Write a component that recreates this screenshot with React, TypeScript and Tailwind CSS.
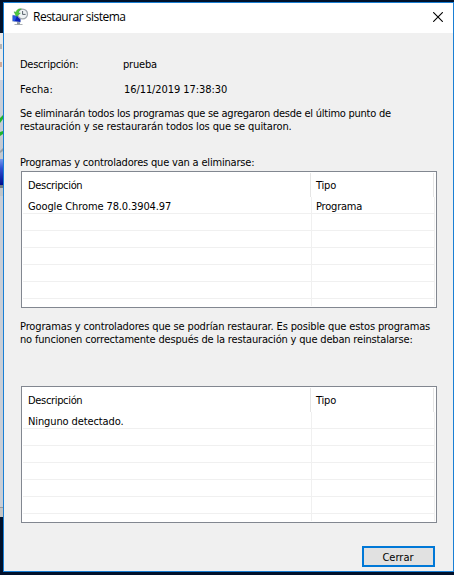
import React from "react";

function Table({ name, kind }: { name: string; kind: string }) {
  return (
    <div className="ml-[17px] flex h-[137px] w-[416px] flex-col border border-[#828790] bg-white p-px">
      <div className="flex h-[24px] shrink-0 pr-px">
        <div className="w-[288px] shrink-0 border-r border-[#e5e5e5] pl-[5px] pt-[6px] leading-[13px] tracking-[-0.33px]">Descripción</div>
        <div className="w-[123px] border-r border-[#e5e5e5] pl-[5px] pt-[6px] leading-[13px] tracking-[-0.2px]">Tipo</div>
      </div>
      <div className="flex h-[17px] shrink-0 border-b border-[#f0f0f0]">
        <div className="w-[289px] shrink-0 border-r border-[#f0f0f0] pl-[5px] pt-[3px] leading-[13px] tracking-[-0.11px]">{name}</div>
        <div className="w-[123px] border-r border-[#f0f0f0] pl-[4px] pt-[3px] leading-[13px] tracking-[-0.2px]">{kind}</div>
      </div>
      {[0, 1, 2, 3, 4].map((i) => (
        <div key={i} className="flex h-[17px] shrink-0 border-b border-[#f0f0f0]">
          <div className="w-[289px] border-r border-[#f0f0f0]" />
          <div className="w-[123px] border-r border-[#f0f0f0]" />
        </div>
      ))}
      <div className="flex flex-1">
        <div className="w-[289px] border-r border-[#f0f0f0]" />
        <div className="w-[123px] border-r border-[#f0f0f0]" />
      </div>
    </div>
  );
}

function RestoreIcon() {
  return (
    <svg className="ml-[8px] mt-[5px] h-[18px] w-[17px] shrink-0" viewBox="0 0 17 18">
      <path d="M3 16h7l1 1H2z" fill="#aab0b4" />
      <path d="M5 14h3v2.4H5z" fill="#8d979e" />
      <path d="M0 6.8 9 7.6v7L0 13.8z" fill="#c8d3dd" />
      <path d="M.8 7.6 8.4 8.4v5.5L.8 13.1z" fill="#0a22b8" />
      <path d="M.8 7.6 4.8 8l-2 5.3-2-.2z" fill="#2358e0" />
      <circle cx="10.6" cy="6" r="4.9" fill="#eef2f4" stroke="#a0a8ae" strokeWidth="1.3" />
      <path d="M10.6 3v3.4h3" fill="none" stroke="#56616a" strokeWidth="1" />
      <path d="M9.4.8C6.4.4 4.6 1.8 4 4.2L2 3.8 4.4 8.4l4-3.2-2.1-.5C6.6 3 7.8 1.8 9.4.8z" fill="#4fc93c" stroke="#299a25" strokeWidth=".4" />
    </svg>
  );
}

function BackgroundEdge() {
  return (
    <div className="flex w-[3px] shrink-0 flex-col overflow-hidden">
      <div className="h-[31px] shrink-0" />
      <div className="h-[47px] shrink-0 bg-[#e9e9e9]">
        <div className="mt-[11px] h-[5px] w-[2px] bg-[#b5b5b5]" />
        <div className="mt-[13px] h-[5px] w-[2px] bg-[#cfaa98]" />
      </div>
      <svg className="h-[116px] w-[3px] shrink-0" viewBox="0 0 3 116">
        <defs>
          <linearGradient id="sky" x1="0" y1="0" x2="0" y2="1">
            <stop offset="0" stopColor="#ccd1dd" />
            <stop offset="1" stopColor="#bfc4c8" />
          </linearGradient>
          <linearGradient id="screen" x1="0" y1="0" x2="0" y2="1">
            <stop offset="0" stopColor="#7598ee" />
            <stop offset=".35" stopColor="#3152d4" />
            <stop offset="1" stopColor="#000c8c" />
          </linearGradient>
        </defs>
        <path d="M0 0h3v116H0z" fill="url(#sky)" />
        <path d="M0 38 3 35v4l-3 4zM0 52l3-1v3l-3 2z" fill="#20b52b" />
        <path d="M0 71 3 68v3l-3 2z" fill="#989fa6" />
        <path d="M0 79h3v26H0z" fill="url(#screen)" />
        <path d="M0 105h3v3H0z" fill="#707a84" />
      </svg>
      <div className="flex-1 bg-[#c9ced6]" />
      <div className="h-[10px] shrink-0 border-t border-[#999] bg-[#c4c4c4]" />
      <div className="h-[58px] shrink-0" />
    </div>
  );
}

export default function App() {
  return (
    <div className="flex h-[575px] w-[454px] overflow-hidden whitespace-nowrap bg-[#00112b] pt-[2px] font-[family-name:'DejaVu_Sans_Condensed','DejaVu_Sans',sans-serif] text-[11px] text-black">
      <BackgroundEdge />
      <div className="flex h-[570px] w-[451px] flex-col border border-[#1a7fd4] bg-[#f0f0f0]">
        <div className="flex h-[30px] shrink-0 bg-white">
          <RestoreIcon />
          <div className="ml-[4px] mt-[6px] font-[family-name:'Open_Sans',sans-serif] text-[12px] leading-[16px] tracking-[-0.5px]">Restaurar sistema</div>
          <svg className="ml-auto mr-[10px] mt-[9px] h-[10px] w-[10px]" viewBox="0 0 10 10">
            <path d="m.2.2 9.6 9.6M9.8.2.2 9.8" stroke="#000" strokeWidth="1.1" />
          </svg>
        </div>
        <div className="ml-[16px] mt-[25px] flex h-[13px] leading-[13px]">
          <span className="w-[103px] tracking-[-0.25px]">Descripción:</span>
          <span className="tracking-[-0.2px]">prueba</span>
        </div>
        <div className="ml-[16px] mt-[12px] flex h-[13px] leading-[13px]">
          <span className="w-[104px] tracking-[0.1px]">Fecha:</span>
          <span className="tracking-[-0.08px]">16/11/2019 17:38:30</span>
        </div>
        <div className="ml-[16px] mt-[11px] h-[49px] leading-[13px]">
          <div className="tracking-[-0.25px]">Se eliminarán todos los programas que se agregaron desde el último punto de</div>
          <div className="tracking-[-0.11px]">restauración y se restaurarán todos los que se quitaron.</div>
        </div>
        <div className="ml-[16px] h-[15px] leading-[13px] tracking-[-0.19px]">Programas y controladores que van a eliminarse:</div>
        <Table name="Google Chrome 78.0.3904.97" kind="Programa" />
        <div className="ml-[16px] mt-[12px] h-[66px] leading-[13px]">
          <div className="tracking-[-0.14px]">Programas y controladores que se podrían restaurar. Es posible que estos programas</div>
          <div className="tracking-[-0.18px]">no funcionen correctamente después de la restauración y que deban reinstalarse:</div>
        </div>
        <Table name="Ninguno detectado." kind="" />
        <button className="ml-[358px] mt-[23px] h-[21px] w-[73px] border-2 border-[#0078d7] bg-[#e1e1e1] pr-px pt-[2px] leading-[15px]">Cerrar</button>
      </div>
    </div>
  );
}
